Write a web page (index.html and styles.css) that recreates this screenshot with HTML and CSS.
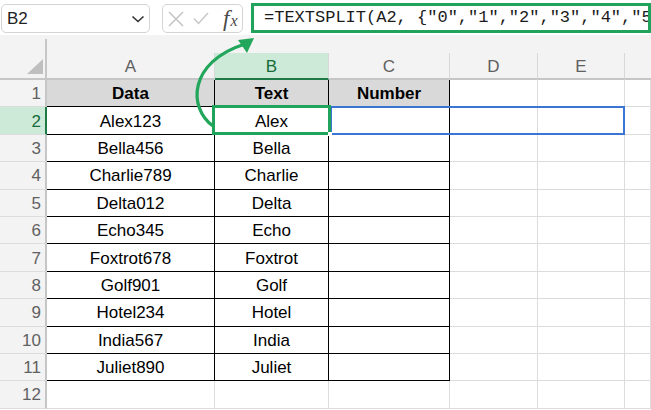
FILE: index.html
```html
<!DOCTYPE html>
<html>
<head>
<meta charset="utf-8">
<link rel="stylesheet" href="styles.css">
</head>
<body>
<div class="page">
  <div class="top">
    <div class="namebox">
      <span class="nb-text">B2</span>
      <svg class="chev" width="14" height="8" viewBox="0 0 14 8"><path d="M1.5 1.5 L7 6.5 L12.5 1.5" fill="none" stroke="#333" stroke-width="1.6"/></svg>
    </div>
    <div class="fxbox">
      <svg class="ico" width="16" height="16" viewBox="0 0 16 16"><path d="M1 1 L15 15 M15 1 L1 15" stroke="#c3c3c3" stroke-width="1.5" fill="none"/></svg>
      <svg class="ico ck" width="16" height="13" viewBox="0 0 16 13"><path d="M1 6.5 L5.5 11.5 L15 1" stroke="#c8c8c8" stroke-width="1.5" fill="none"/></svg>
      <span class="fx"><span class="fx-f">f</span><span class="fx-x">x</span></span>
    </div>
    <div class="formula">=TEXTSPLIT(A2, {"0","1","2","3","4","5","6","7","8","9"})</div>
  </div>

  <div class="sheet">
    <div class="corner"><svg width="16" height="15" viewBox="0 0 16 15"><polygon points="16,0 16,15 0,15" fill="#bfbfbf"/></svg></div>
    <div class="band"></div>
    <div class="ch">A</div><div class="ch sel">B</div><div class="ch">C</div><div class="ch">D</div><div class="ch">E</div><div class="ch last"></div>

    <div class="rh">1</div><div class="c t h">Data</div><div class="c t h">Text</div><div class="c t h">Number</div><div class="c tl"></div><div class="c"></div><div class="c"></div>
    <div class="rh sel">2</div><div class="c t">Alex123</div><div class="c t">Alex</div><div class="c t"></div><div class="c tl"></div><div class="c"></div><div class="c"></div>
    <div class="rh">3</div><div class="c t">Bella456</div><div class="c t">Bella</div><div class="c t"></div><div class="c tl"></div><div class="c"></div><div class="c"></div>
    <div class="rh">4</div><div class="c t">Charlie789</div><div class="c t">Charlie</div><div class="c t"></div><div class="c tl"></div><div class="c"></div><div class="c"></div>
    <div class="rh">5</div><div class="c t">Delta012</div><div class="c t">Delta</div><div class="c t"></div><div class="c tl"></div><div class="c"></div><div class="c"></div>
    <div class="rh">6</div><div class="c t">Echo345</div><div class="c t">Echo</div><div class="c t"></div><div class="c tl"></div><div class="c"></div><div class="c"></div>
    <div class="rh">7</div><div class="c t">Foxtrot678</div><div class="c t">Foxtrot</div><div class="c t"></div><div class="c tl"></div><div class="c"></div><div class="c"></div>
    <div class="rh">8</div><div class="c t">Golf901</div><div class="c t">Golf</div><div class="c t"></div><div class="c tl"></div><div class="c"></div><div class="c"></div>
    <div class="rh">9</div><div class="c t">Hotel234</div><div class="c t">Hotel</div><div class="c t"></div><div class="c tl"></div><div class="c"></div><div class="c"></div>
    <div class="rh">10</div><div class="c t">India567</div><div class="c t">India</div><div class="c t"></div><div class="c tl"></div><div class="c"></div><div class="c"></div>
    <div class="rh">11</div><div class="c t">Juliet890</div><div class="c t">Juliet</div><div class="c t"></div><div class="c tl"></div><div class="c"></div><div class="c"></div>
    <div class="rh">12</div><div class="c tt"></div><div class="c tt"></div><div class="c tt"></div><div class="c"></div><div class="c"></div><div class="c"></div>
  </div>

  <div class="range"></div>
  <div class="active"><span class="handle"></span></div>
  <svg class="arrow" width="651" height="410" viewBox="0 0 651 410">
    <path d="M213 126 C188 108, 188 62, 245 44" fill="none" stroke="#22a65b" stroke-width="3.2" stroke-linecap="round"/>
    <polygon points="254,38 238,40 247,53" fill="#22a65b"/>
  </svg>
</div>
</body>
</html>
```
FILE: styles.css
```css
* { box-sizing: border-box; }
html, body { margin: 0; padding: 0; background: #fff; }
body { font-family: "Liberation Sans", Arial, sans-serif; overflow: hidden; width: 651px; height: 410px; }
.page { position: relative; width: 651px; height: 410px; overflow: hidden; }

.top { height: 35px; display: flex; align-items: flex-start; background: #fff; }
.namebox {
  margin: 4px 0 0 1px; width: 153px; height: 29px;
  border: 1px solid #d4d4d4; border-radius: 5px;
  display: flex; align-items: center; justify-content: space-between;
  padding: 0 4px 0 5px; font-size: 17px; color: #222;
}
.chev { margin-top: 1px; }
.fxbox {
  margin: 4px 0 0 12px; width: 83px; height: 29px;
  border: 1px solid #d4d4d4; border-radius: 5px;
  display: flex; align-items: center; padding-left: 5px;
}
.ico { flex: none; }
.ck { margin-left: 9px; }
.fx { margin-left: 14px; font-family: "Liberation Serif", serif; font-style: italic; color: #4a4a4a; display: flex; align-items: baseline; }
.fx-f { font-size: 23px; }
.fx-x { font-size: 16px; margin-left: 1px; }
.formula {
  flex: none; margin: 3px 0 0 8px; width: 400px; height: 30px;
  border: 3px solid #21a35b; padding: 0 0 0 10px;
  font-family: "Liberation Mono", monospace; font-size: 17px; color: #1b1b1b;
  line-height: 24px; white-space: nowrap; overflow: hidden;
}

.sheet {
  display: grid;
  grid-template-columns: 47px 168px 114px 121px 88px 87px 26px;
  grid-template-rows: 18px 27px repeat(12, 27.4px);
  font-size: 17px;
}
.corner {
  grid-row: 1 / 3; grid-column: 1;
  background: linear-gradient(#c6c6c6, #c6c6c6) right 4px / 2px calc(100% - 4px) no-repeat, #f3f3f3;
  border-bottom: 2px solid #c6c6c6;
  display: flex; justify-content: flex-end; align-items: flex-end;
  padding: 0 4px 4px 0;
}
.corner svg { display: block; }
.band { grid-row: 1; grid-column: 2 / -1; background: #f3f3f3; }
.ch {
  background: #f3f3f3; color: #606060;
  border-right: 1px solid #d8d8d8; border-bottom: 2px solid #c6c6c6;
  display: flex; align-items: center; justify-content: center; padding-top: 2px;
}
.ch.last { border-right: none; }
.ch.sel { background: #cdead8; color: #176a3a; border-bottom-color: #1e7b46; }

.rh {
  background: #f3f3f3; color: #616161;
  border-right: 2px solid #c6c6c6; border-bottom: 1px solid #dcdcdc;
  display: flex; align-items: center; justify-content: flex-end; padding: 2px 4px 0 0;
}
.rh.sel { background: #cdead8; color: #176a3a; border-right-color: #1e7b46; }

.c {
  background: #fff; color: #000;
  border-right: 1px solid #dcdcdc; border-bottom: 1px solid #dcdcdc;
  display: flex; align-items: center; justify-content: center; padding-top: 2px;
  white-space: nowrap;
}
.c.t { border-right-color: #000; border-bottom-color: #000; }
.c.h { background: #d9d9d9; font-weight: bold; }

.range {
  position: absolute; left: 330px; top: 106px; width: 295px; height: 29px;
  border: 2px solid #3a75d5; pointer-events: none;
}
.active {
  position: absolute; left: 212px; top: 105px; width: 119px; height: 30px;
  border: 3px solid #21a35b; pointer-events: none;
}
.handle {
  position: absolute; right: -4px; bottom: -4px; width: 4px; height: 4px; background: #fff;
}
.arrow { position: absolute; left: 0; top: 0; pointer-events: none; }
```
